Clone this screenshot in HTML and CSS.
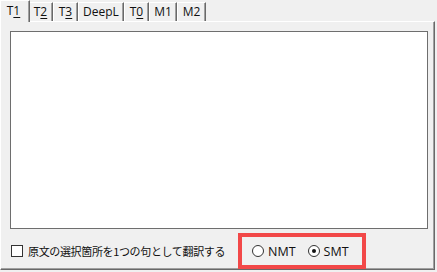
FILE: index.html
```html
<!DOCTYPE html>
<html lang="ja">
<head>
<meta charset="utf-8">
<link rel="stylesheet" href="styles.css">
</head>
<body>
<div class="window">
  <div class="tabs">
    <div class="tab selected">T<u>1</u></div>
    <div class="tab narrow">T<u>2</u></div>
    <div class="tab narrow">T<u>3</u></div>
    <div class="tab wide">DeepL</div>
    <div class="tab narrow">T<u>0</u></div>
    <div class="tab medium">M1</div>
    <div class="tab medium last">M2</div>
  </div>
  <div class="panel">
    <div class="textbox"></div>
    <div class="options">
      <label class="check"><span class="checkbox"></span><span class="jp">原文の選択箇所を1つの句として翻訳する</span></label>
      <div class="radios">
        <label class="radio"><span class="circle"></span>NMT</label>
        <label class="radio"><span class="circle checked"></span>SMT</label>
      </div>
    </div>
  </div>
</div>
</body>
</html>
```
FILE: styles.css
```css
html, body {
  margin: 0;
  padding: 0;
  background: #f0f0f0;
}
body {
  width: 437px;
  height: 272px;
  overflow: hidden;
  font-family: "Open Sans", "Noto Sans CJK JP", sans-serif;
  font-size: 12px;
  color: #111;
}
.window {
  display: flex;
  flex-direction: column;
}
.tabs {
  display: flex;
  height: 21px;
  align-items: flex-start;
  position: relative;
  z-index: 1;
}
.tab {
  box-sizing: border-box;
  margin-top: 2px;
  height: 19px;
  text-align: center;
  line-height: 17px;
  background: #f0f0f0;
  border-top: 1px solid #fff;
  border-left: 1px solid #fff;
  border-right: 1px solid #696969;
  box-shadow: inset -1px 0 0 #a0a0a0;
  white-space: nowrap;
}
.tab.narrow { width: 25px; }
.tab.wide { width: 46px; }
.tab.medium { width: 28px; }
.tab.last { width: 29px; }
.tab u {
  text-decoration-thickness: 1px;
  text-underline-offset: 2px;
}
.tab.selected {
  margin-top: 0;
  width: 30px;
  height: 22px;
  padding-right: 3px;
  line-height: 20px;
  margin-right: -2px;
  position: relative;
  z-index: 2;
}
.panel {
  box-sizing: border-box;
  width: 435px;
  height: 249px;
  border-top: 1px solid #fff;
  border-left: 1px solid #fff;
  border-right: 1px solid #696969;
  border-bottom: 1px solid #696969;
  box-shadow: inset -1px -1px 0 #a0a0a0;
  padding: 9px 0 0 9px;
  display: flex;
  flex-direction: column;
}
.textbox {
  box-sizing: border-box;
  width: 418px;
  height: 198px;
  background: #fff;
  border: 1px solid #6e6e6e;
}
.options {
  display: flex;
  align-items: center;
  margin-top: 4px;
}
.check {
  display: flex;
  align-items: center;
  margin-left: 1px;
  width: 227px;
}
.checkbox {
  box-sizing: border-box;
  width: 12px;
  height: 12px;
  background: #fff;
  border: 1px solid #333;
  margin-right: 5px;
}
.jp {
  font-family: "Noto Sans CJK JP", sans-serif;
  font-size: 11px;
  letter-spacing: -0.35px;
  color: #111;
}
.radios {
  box-sizing: border-box;
  width: 128px;
  height: 36px;
  border: 4px solid #f24848;
  display: flex;
  align-items: center;
  padding-left: 10px;
  gap: 12px;
  font-size: 12.5px;
}
.radio {
  display: flex;
  align-items: center;
}
.circle {
  box-sizing: border-box;
  width: 12px;
  height: 12px;
  border-radius: 50%;
  border: 1px solid #333;
  background: #fff;
  margin-right: 4px;
  display: flex;
  align-items: center;
  justify-content: center;
}
.circle.checked::after {
  content: "";
  width: 4px;
  height: 4px;
  border-radius: 50%;
  background: #111;
}
```
